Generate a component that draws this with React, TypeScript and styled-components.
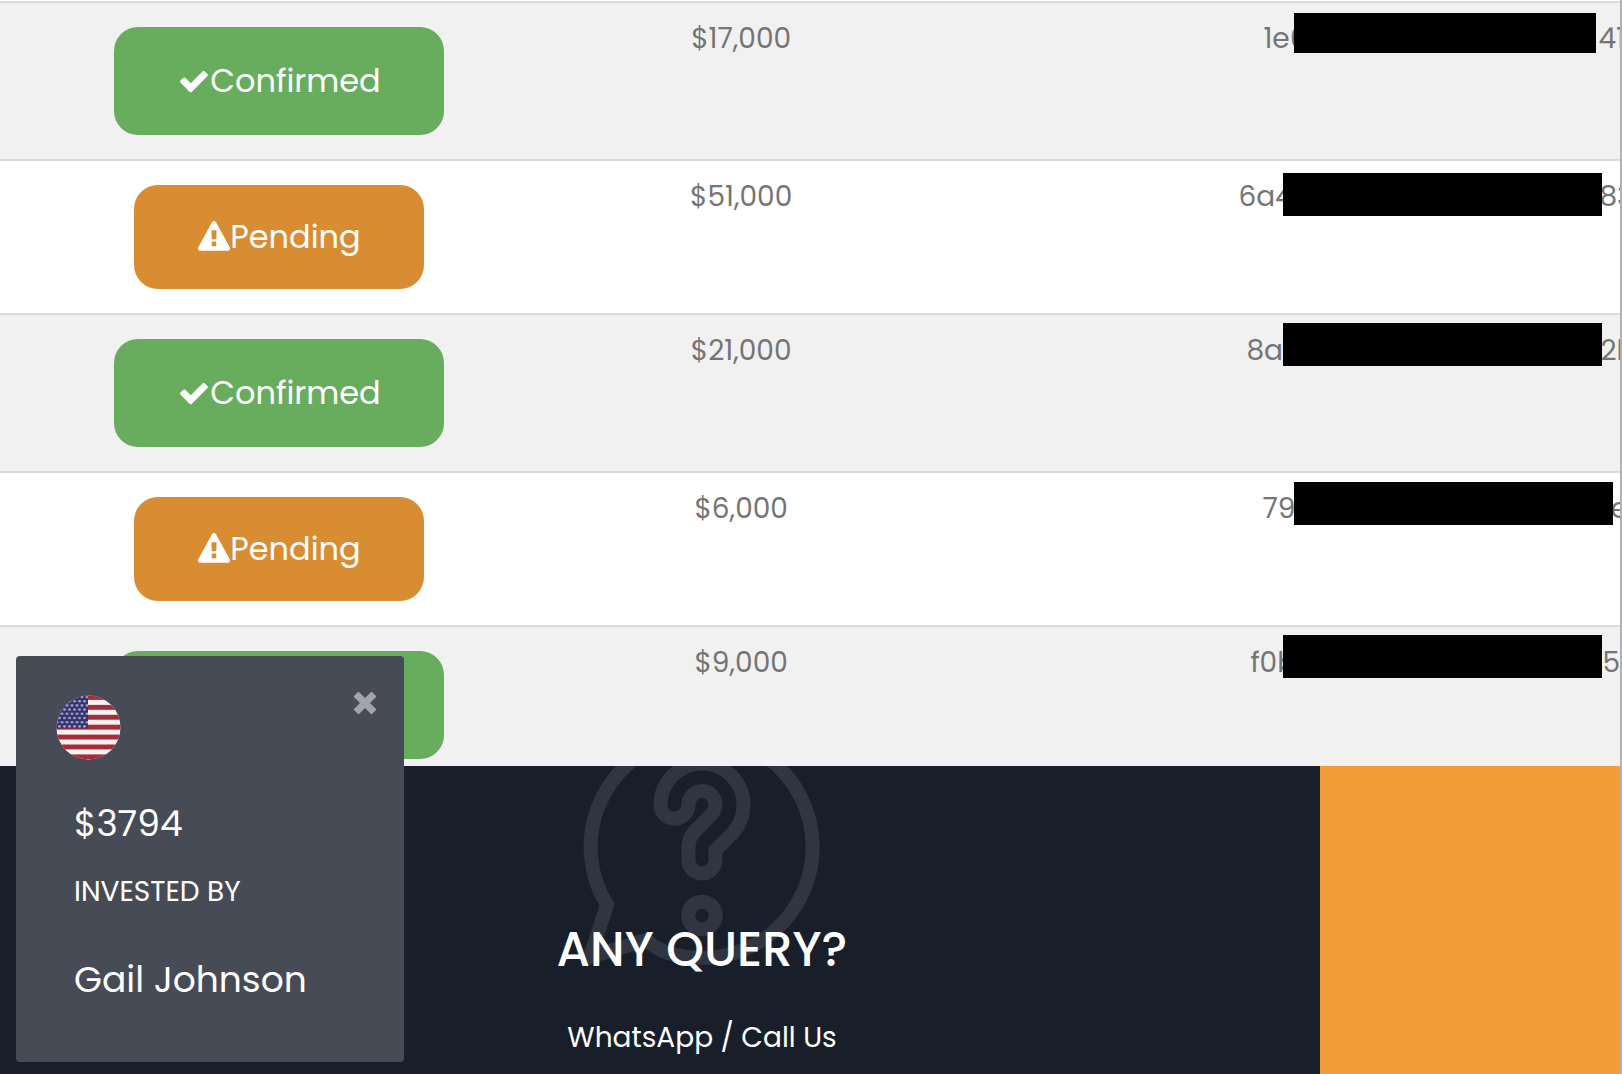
import React, { useState } from "react";
import styled, { createGlobalStyle } from "styled-components";

const GlobalStyle = createGlobalStyle`
  *, *::before, *::after { box-sizing: border-box; }
  body {
    margin: 0;
    background: #ffffff;
    font-family: Poppins, Inter, "Open Sans", sans-serif;
  }
`;

type Status = "confirmed" | "pending";

interface Payment {
  status: Status;
  amount: string;
  head: string;
  tail: string;
  indent: number;
  tailAt: number;
  mask: { left: number; top: number; width: number; height: number };
}

const payments: Payment[] = [
  { status: "confirmed", amount: "$17,000", head: "1e6", tail: "41", indent: 25, tailAt: 360, mask: { left: 56, top: -14, width: 302, height: 40 } },
  { status: "pending", amount: "$51,000", head: "6a4", tail: "83", indent: 0, tailAt: 361, mask: { left: 45, top: -12, width: 319, height: 43 } },
  { status: "confirmed", amount: "$21,000", head: "8a", tail: "2b", indent: 8, tailAt: 362, mask: { left: 45, top: -16, width: 319, height: 43 } },
  { status: "pending", amount: "$6,000", head: "79", tail: "e", indent: 24, tailAt: 372, mask: { left: 56, top: -15, width: 319, height: 43 } },
  { status: "confirmed", amount: "$9,000", head: "f0b", tail: "5", indent: 12, tailAt: 364, mask: { left: 45, top: -16, width: 319, height: 43 } },
];

const Page = styled.div`
  display: flex;
  flex-direction: column;
  min-height: 100vh;
  padding-top: 1px;
  border-right: 2px solid #b1b2b4;
  overflow: hidden;
`;

const Table = styled.table`
  width: 100%;
  table-layout: fixed;
  border-spacing: 0;
  color: #757575;
  font-size: 28px;
  line-height: 24px;
`;

const Row = styled.tr`
  background: #ffffff;
  &:nth-child(odd) { background: #f1f1f1; }
  &:last-child td { padding-bottom: 7px; }
`;

const Cell = styled.td<{ $width?: string }>`
  width: ${(p) => p.$width ?? "auto"};
  padding: 24px 0;
  border-top: 2px solid #d8dada;
  text-align: center;
  vertical-align: top;
`;

const HashCell = styled(Cell)`
  padding-left: 315px;
  text-align: left;
  white-space: nowrap;
  overflow: hidden;
`;

const Hash = styled.div<{ $indent: number }>`
  position: relative;
  display: flex;
  padding-left: ${(p) => p.$indent}px;
`;

const HashHead = styled.span<{ $width: number }>`
  flex: 0 0 ${(p) => p.$width}px;
`;

const Redaction = styled.span<{ $box: Payment["mask"] }>`
  position: absolute;
  left: ${(p) => p.$box.left}px;
  top: ${(p) => p.$box.top}px;
  width: ${(p) => p.$box.width}px;
  height: ${(p) => p.$box.height}px;
  background: #000000;
`;

const StatusButton = styled.button<{ $status: Status }>`
  display: flex;
  align-items: center;
  justify-content: center;
  min-width: ${(p) => (p.$status === "confirmed" ? 330 : 290)}px;
  height: ${(p) => (p.$status === "confirmed" ? 108 : 104)}px;
  margin: 0 auto;
  padding: 0 60px;
  border: 0;
  border-radius: 24px;
  background: ${(p) => (p.$status === "confirmed" ? "#68ad5d" : "#d98d32")};
  color: #ffffff;
  font: inherit;
  font-size: 32px;
  cursor: pointer;
`;

const Glyph = styled.svg`
  flex: none;
  width: 32px;
  height: 32px;
  fill: currentColor;
`;

const QuerySection = styled.section`
  display: flex;
  flex: 1;
  min-height: 308px;
`;

const QueryPanel = styled.div`
  position: relative;
  display: flex;
  flex: 1;
  flex-direction: column;
  align-items: center;
  padding: 148px 0 0 84px;
  background: #181f2b;
  color: #ffffff;
`;

const AccentPanel = styled.div`
  flex: 0 0 300px;
  background: #f29d39;
`;

const QueryHeading = styled.h2`
  position: relative;
  margin: 0;
  font-size: 48px;
  font-weight: 500;
  line-height: 72px;
`;

const QueryText = styled.p`
  margin: 32px 0 0;
  font-size: 28px;
  line-height: 40px;
`;

const Watermark = styled.svg`
  position: absolute;
  top: -40px;
  left: calc(50% + 42px);
  width: 240px;
  height: 240px;
  transform: translateX(-50%);
  opacity: 0.1;
  fill: none;
  stroke: #ffffff;
  stroke-width: 14;
`;

const Popup = styled.aside`
  position: fixed;
  left: 16px;
  bottom: 12px;
  width: 388px;
  padding: 39px 27px 58px 40px;
  border-radius: 4px;
  background: #464b55;
  color: #ffffff;
`;

const PopupTop = styled.div`
  display: flex;
  align-items: flex-start;
  justify-content: space-between;
`;

const Flag = styled.svg`
  width: 65px;
  height: 65px;
`;

const CloseButton = styled.button`
  display: flex;
  margin: -8px -8px 0 0;
  padding: 4px 8px;
  border: 0;
  background: none;
  color: #a3a4a9;
  cursor: pointer;
`;

const CloseGlyph = styled.svg`
  width: 24px;
  height: 24px;
  fill: currentColor;
`;

const PopupBody = styled.div`
  display: flex;
  flex-direction: column;
  padding: 40px 18px 0;
`;

const PopupLine = styled.p`
  margin: 0;
  font-size: 36px;
  line-height: 48px;
`;

const PopupCaption = styled.p`
  margin: 24px 0 44px;
  font-size: 28px;
  line-height: 40px;
  text-transform: uppercase;
`;

const CheckIcon = () => (
  <Glyph viewBox="0 0 1792 1792" aria-hidden="true">
    <path d="M1671 566q0 40-28 68l-724 724-136 136q-28 28-68 28t-68-28l-136-136-362-362q-28-28-28-68t28-68l136-136q28-28 68-28t68 28l294 295 656-657q28-28 68-28t68 28l136 136q28 28 28 68z" />
  </Glyph>
);

const WarningIcon = () => (
  <Glyph viewBox="0 0 1792 1792" aria-hidden="true">
    <path d="M1024 1375v-190q0-14-9.500-23.500t-22.500-9.500h-192q-13 0-22.500 9.500t-9.500 23.500v190q0 14 9.500 23.500t22.500 9.500h192q13 0 22.500-9.500t9.500-23.500zm-2-374l18-459q0-12-10-19-13-11-24-11h-220q-11 0-24 11-10 7-10 21l17 457q0 10 10 16.500t24 6.500h185q14 0 23.500-6.500t10.500-16.500zm-14-934l768 1408q35 63-2 126-17 29-46.500 46t-63.500 17h-1536q-34 0-63.500-17t-46.500-46q-37-63-2-126l768-1408q17-31 47-49t65-18 65 18 47 49z" />
  </Glyph>
);

const QuestionBubble = () => (
  <Watermark viewBox="0 0 240 240" aria-hidden="true">
    <path d="M25 179 A111 111 0 1 1 94 229 Q78 226 64 214 L8 231 Z" />
    <path d="M78.500 79 A41.500 41.500 0 0 1 161.500 79 Q161.500 95 151 107 L133.500 124 V134 A13.500 13.500 0 0 1 106.500 134 V120 Q107 111 113 105 L128 90 Q133.500 85 133.500 78.500 A13.500 13.500 0 0 0 106.500 78.500 A14 14 0 0 1 78.500 79 Z" />
    <circle cx="120" cy="189.500" r="13.700" />
  </Watermark>
);

const UsFlag = () => {
  const stripes = [0, 2, 4, 6, 8, 10, 12];
  const rows = [0, 1, 2, 3, 4, 5, 6, 7];
  const columns = [0, 1, 2, 3, 4, 5, 6];
  return (
    <Flag viewBox="0 0 65 65" role="img" aria-label="United States">
      <defs>
        <clipPath id="flag-circle">
          <circle cx="32.500" cy="32.500" r="32" />
        </clipPath>
        <clipPath id="flag-canton">
          <rect width="32" height="33.500" />
        </clipPath>
      </defs>
      <g clipPath="url(#flag-circle)">
        <rect width="65" height="65" fill="#f7f1f2" />
        {stripes.map((i) => (
          <rect key={i} y={i * 4.95} width="65" height="4.900" fill="#a52c38" />
        ))}
        <g clipPath="url(#flag-canton)">
          <rect width="32" height="33.500" fill="#34356f" />
          {rows.map((r) =>
            columns.map((c) => (
              <ellipse key={`${r}-${c}`} cx={1 + c * 5 + (r % 2) * 2.5} cy={2 + r * 4.2} rx="1.500" ry="1.300" fill="#9a9ac2" />
            ))
          )}
        </g>
      </g>
    </Flag>
  );
};

const StatusBadge = ({ status }: { status: Status }) => (
  <StatusButton type="button" $status={status}>
    {status === "confirmed" ? <CheckIcon /> : <WarningIcon />}
    {status === "confirmed" ? "Confirmed" : "Pending"}
  </StatusButton>
);

export default function App() {
  const [open, setOpen] = useState(true);
  return (
    <>
      <GlobalStyle />
      <Page>
        <Table>
          <tbody>
            {payments.map((p) => (
              <Row key={p.amount}>
                <Cell $width="34.500%"><StatusBadge status={p.status} /></Cell>
                <Cell $width="22.500%">{p.amount}</Cell>
                <HashCell>
                  <Hash $indent={p.indent}>
                    <HashHead $width={p.tailAt - p.indent}>{p.head}</HashHead>
                    <span>{p.tail}</span>
                    <Redaction $box={p.mask} />
                  </Hash>
                </HashCell>
              </Row>
            ))}
          </tbody>
        </Table>
        <QuerySection>
          <QueryPanel>
            <QuestionBubble />
            <QueryHeading>ANY QUERY?</QueryHeading>
            <QueryText>WhatsApp / Call Us</QueryText>
          </QueryPanel>
          <AccentPanel />
        </QuerySection>
      </Page>
      {open && (
        <Popup>
          <PopupTop>
            <UsFlag />
            <CloseButton type="button" aria-label="Close" onClick={() => setOpen(false)}>
              <CloseGlyph viewBox="0 0 24 24" aria-hidden="true">
                <path d="M5 1Q5.500 .5 6 1L12 7L18 1Q18.500 .5 19 1L23 5Q23.500 5.500 23 6L17 12L23 18Q23.500 18.500 23 19L19 23Q18.500 23.500 18 23L12 17L6 23Q5.500 23.500 5 23L1 19Q.5 18.500 1 18L7 12L1 6Q.5 5.500 1 5Z" />
              </CloseGlyph>
            </CloseButton>
          </PopupTop>
          <PopupBody>
            <PopupLine>$3794</PopupLine>
            <PopupCaption>Invested by</PopupCaption>
            <PopupLine>Gail Johnson</PopupLine>
          </PopupBody>
        </Popup>
      )}
    </>
  );
}
